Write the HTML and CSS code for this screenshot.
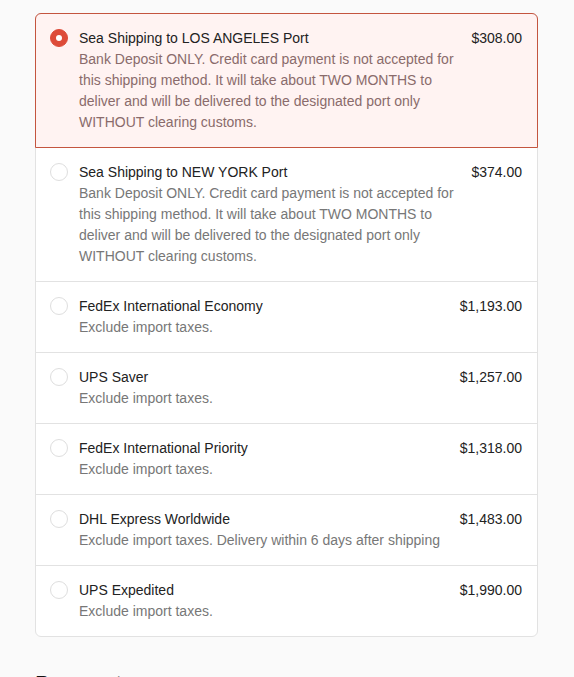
FILE: index.html
```html
<!DOCTYPE html>
<html lang="en">
<head>
<meta charset="utf-8">
<title>Shipping</title>
<link rel="stylesheet" href="styles.css">
</head>
<body>
<div class="page">
  <div class="methods">
    <label class="method selected">
      <span class="radio checked"></span>
      <span class="info">
        <span class="name">Sea Shipping to LOS ANGELES Port</span>
        <span class="desc">Bank Deposit ONLY. Credit card payment is not accepted for this shipping method. It will take about TWO MONTHS to deliver and will be delivered to the designated port only WITHOUT clearing customs.</span>
      </span>
      <span class="price">$308.00</span>
    </label>
    <label class="method">
      <span class="radio"></span>
      <span class="info">
        <span class="name">Sea Shipping to NEW YORK Port</span>
        <span class="desc">Bank Deposit ONLY. Credit card payment is not accepted for this shipping method. It will take about TWO MONTHS to deliver and will be delivered to the designated port only WITHOUT clearing customs.</span>
      </span>
      <span class="price">$374.00</span>
    </label>
    <label class="method">
      <span class="radio"></span>
      <span class="info">
        <span class="name">FedEx International Economy</span>
        <span class="desc">Exclude import taxes.</span>
      </span>
      <span class="price">$1,193.00</span>
    </label>
    <label class="method">
      <span class="radio"></span>
      <span class="info">
        <span class="name">UPS Saver</span>
        <span class="desc">Exclude import taxes.</span>
      </span>
      <span class="price">$1,257.00</span>
    </label>
    <label class="method">
      <span class="radio"></span>
      <span class="info">
        <span class="name">FedEx International Priority</span>
        <span class="desc">Exclude import taxes.</span>
      </span>
      <span class="price">$1,318.00</span>
    </label>
    <label class="method">
      <span class="radio"></span>
      <span class="info">
        <span class="name">DHL Express Worldwide</span>
        <span class="desc">Exclude import taxes. Delivery within 6 days after shipping</span>
      </span>
      <span class="price">$1,483.00</span>
    </label>
    <label class="method">
      <span class="radio"></span>
      <span class="info">
        <span class="name">UPS Expedited</span>
        <span class="desc">Exclude import taxes.</span>
      </span>
      <span class="price">$1,990.00</span>
    </label>
  </div>
  <h2 class="section-title">Payment</h2>
</div>
</body>
</html>
```
FILE: styles.css
```css
html, body {
  margin: 0;
  padding: 0;
  background: #fafafa;
}
body {
  font-family: "Liberation Sans", Arial, sans-serif;
  font-size: 14px;
  line-height: 21px;
  color: #222;
}
.page {
  padding: 13px 36px 0 35px;
}
.methods {
  background: #fff;
  border: 1px solid #e2e2e2;
  border-radius: 6px;
  display: flex;
  flex-direction: column;
}
.method {
  display: flex;
  align-items: flex-start;
  gap: 11px;
  padding: 14px 15px 14px 14px;
  border-top: 1px solid #e2e2e2;
  cursor: pointer;
}
.method:first-child {
  border-top: none;
  border-radius: 6px 6px 0 0;
}
.method.selected {
  background: #fff3f2;
  margin: -1px -1px 0 -1px;
  border: 1px solid #c4553f;
}
.method.selected + .method {
  border-top: none;
}
.radio {
  flex: none;
  width: 16px;
  height: 16px;
  margin-top: 1px;
  border: 1px solid #dedede;
  border-radius: 50%;
  background: #fff;
  box-sizing: content-box;
  display: flex;
  align-items: center;
  justify-content: center;
}
.radio.checked {
  background: #dd4b39;
  border-color: #dd4b39;
}
.radio.checked::after {
  content: "";
  width: 6px;
  height: 6px;
  border-radius: 50%;
  background: #fff;
}
.info {
  flex: 1;
  display: flex;
  flex-direction: column;
  min-width: 0;
}
.name {
  color: #222;
}
.desc {
  color: #777;
}
.selected .desc {
  color: #8a6b6b;
}
.price {
  flex: none;
  color: #222;
}
.section-title {
  margin: 33px 0 0 0;
  font-size: 22px;
  font-weight: 400;
  line-height: 28px;
  color: #111;
}
```
